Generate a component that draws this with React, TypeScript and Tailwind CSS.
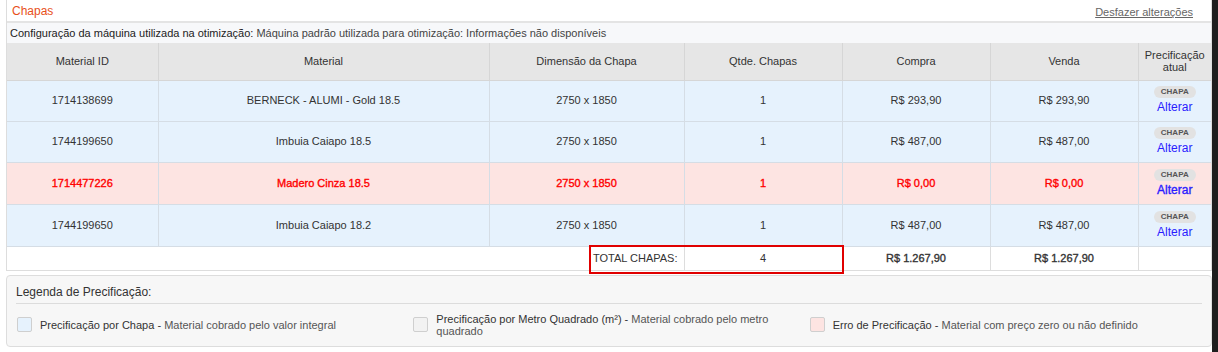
import React from "react"

type Row = {
  id: string
  material: string
  dim: string
  qtd: number
  compra: string
  venda: string
  error?: boolean
}

const rows: Row[] = [
  { id: "1714138699", material: "BERNECK - ALUMI - Gold 18.5", dim: "2750 x 1850", qtd: 1, compra: "R$ 293,90", venda: "R$ 293,90" },
  { id: "1744199650", material: "Imbuia Caiapo 18.5", dim: "2750 x 1850", qtd: 1, compra: "R$ 487,00", venda: "R$ 487,00" },
  { id: "1714477226", material: "Madero Cinza 18.5", dim: "2750 x 1850", qtd: 1, compra: "R$ 0,00", venda: "R$ 0,00", error: true },
  { id: "1744199650", material: "Imbuia Caiapo 18.2", dim: "2750 x 1850", qtd: 1, compra: "R$ 487,00", venda: "R$ 487,00" },
]

const headers = ["Material ID", "Material", "Dimensão da Chapa", "Qtde. Chapas", "Compra", "Venda"]

function LegendItem({ box, label, desc }: { box: string; label: string; desc: string }) {
  return (
    <div className="flex items-center gap-[8px]">
      <span className={`w-[15px] h-[15px] shrink-0 border border-[#cfcfcf] rounded-[2px] ${box}`} />
      <p className="leading-[12px] text-[#333]">
        {label} - <span className="text-[#555]">{desc}</span>
      </p>
    </div>
  )
}

export default function App() {
  return (
    <div
      className="w-[1218px] h-[352px] flex bg-white text-[11px] text-[#333]"
      style={{ fontFamily: '"Liberation Sans", Arial, sans-serif' }}
    >
      <div className="w-[1212px] pl-[6px] flex flex-col">
        <div className="border-x border-[#dddddd]">
          {/* title */}
          <div className="h-[21px] flex items-start justify-between pl-[5px] pr-[18px]">
            <span className="pt-[4px] text-[12px] text-[#e8501a] leading-[14px]">Chapas</span>
            <span className="mt-[6px] text-[11px] text-[#666] underline leading-[13px]">Desfazer alterações</span>
          </div>
          <div className="h-[2px] bg-[#e4e4e4]" />
          <div className="h-[20px] flex items-center px-[3px] bg-[#f7f8fa]">
            <span className="text-[#222]">Configuração da máquina utilizada na otimização:</span>
            <span className="ml-[3px] text-[#444]">Máquina padrão utilizada para otimização: Informações não disponíveis</span>
          </div>

          <table className="w-full table-fixed border-collapse">
            <colgroup>
              <col className="w-[151px]" />
              <col className="w-[331px]" />
              <col className="w-[195px]" />
              <col className="w-[158px]" />
              <col className="w-[148px]" />
              <col className="w-[148px]" />
              <col className="w-[73px]" />
            </colgroup>
            <thead>
              <tr className="h-[37px] bg-[#e6e6e6]">
                {headers.map((h) => (
                  <th key={h} className="font-normal text-[#333] border border-[#d6d6d6] border-t-0 first:border-l-0">
                    {h}
                  </th>
                ))}
                <th className="font-normal text-[#333] leading-[12px] border-b border-[#d6d6d6]">
                  Precificação
                  <br />
                  atual
                </th>
              </tr>
            </thead>
            <tbody>
              {rows.map((r, i) => {
                const rowCls = r.error
                  ? "bg-[#fde4e2] text-[#ff0000] [-webkit-text-stroke:0.35px_#ff0000]"
                  : "bg-[#e6f2fd] text-[#333]"
                return (
                  <tr key={i} className={`${i < 2 ? "h-[41px]" : "h-[42px]"} ${rowCls}`}>
                    <td className="text-center border border-[#d5dde5] border-l-0">{r.id}</td>
                    <td className="text-center border border-[#d5dde5]">{r.material}</td>
                    <td className="text-center border border-[#d5dde5]">{r.dim}</td>
                    <td className="text-center border border-[#d5dde5]">{r.qtd}</td>
                    <td className="text-center border border-[#d5dde5]">{r.compra}</td>
                    <td className="text-center border border-[#d5dde5]">{r.venda}</td>
                    <td className="text-center border-y border-[#d5dde5]">
                      <div className="flex flex-col items-center">
                        <span className="rounded-full bg-[#e2e2e2] px-[7px] text-[8px] leading-[12px] font-bold text-[#555] [-webkit-text-stroke:0px]">
                          CHAPA
                        </span>
                        <span
                          className={`text-[12px] leading-[16px] text-[#2a1cff] mt-[1px] ${
                            r.error ? "[-webkit-text-stroke:0.35px_#2a1cff]" : ""
                          }`}
                        >
                          Alterar
                        </span>
                      </div>
                    </td>
                  </tr>
                )
              })}
              <tr className="h-[24px] bg-white">
                <td className="relative text-right pr-[6px] border-b border-r border-[#dddddd]" colSpan={3}>
                  TOTAL CHAPAS:
                  <div className="absolute left-[582px] top-[-2px] w-[255px] h-[29px] border-2 border-[#e00000]" />
                </td>
                <td className="text-center border border-[#dddddd]">4</td>
                <td className="text-center border border-[#dddddd] [-webkit-text-stroke:0.35px_#333]">R$ 1.267,90</td>
                <td className="text-center border border-[#dddddd] [-webkit-text-stroke:0.35px_#333]">R$ 1.267,90</td>
                <td className="border-b border-[#dddddd]" />
              </tr>
            </tbody>
          </table>
        </div>

        {/* legend */}
        <div className="mt-[4px] h-[72px] rounded-[4px] border border-[#dddddd] bg-[#f7f7f7] px-[9px]">
          <div className="pt-[8px] pb-[3px] text-[12px] leading-[16px] text-[#333] border-b border-[#dcdcdc]">
            Legenda de Precificação:
          </div>
          <div className="grid grid-cols-3 gap-x-[4px] pt-[9px] pl-[1px]">
            <LegendItem box="bg-[#e6f2fd]" label="Precificação por Chapa" desc="Material cobrado pelo valor integral" />
            <LegendItem
              box="bg-[#f2f2f2]"
              label="Precificação por Metro Quadrado (m²)"
              desc="Material cobrado pelo metro quadrado"
            />
            <LegendItem box="bg-[#fde4e2]" label="Erro de Precificação" desc="Material com preço zero ou não definido" />
          </div>
        </div>
      </div>
      <div className="w-[6px] bg-[#1e1e1e]" />
    </div>
  )
}
